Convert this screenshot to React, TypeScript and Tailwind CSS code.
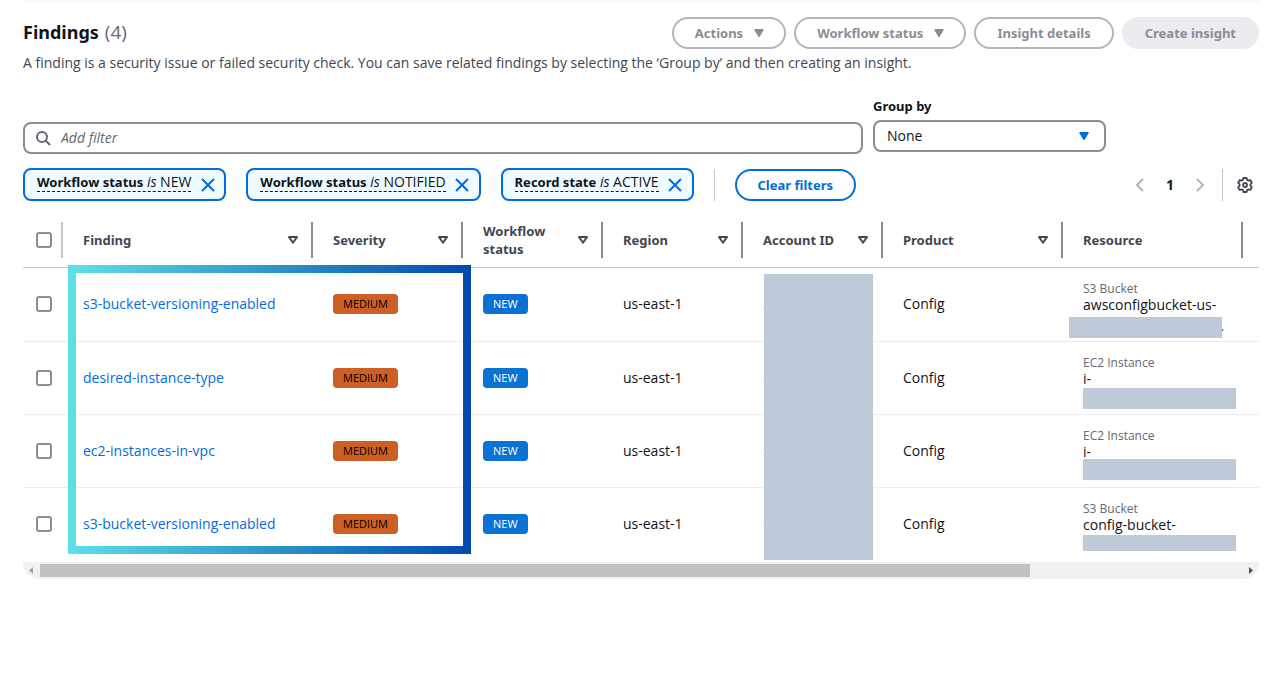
import type { ReactNode } from "react";

type Finding = {
  title: string;
  kind: string;
  resource: string;
  mask: string;
  tail?: string;
};

const findings: Finding[] = [
  {
    title: "s3-bucket-versioning-enabled",
    kind: "S3 Bucket",
    resource: "awsconfigbucket-us-",
    mask: "left-[6px] top-[49px] h-[21px]",
    tail: ".",
  },
  { title: "desired-instance-type", kind: "EC2 Instance", resource: "i-", mask: "left-5 top-[46px] h-[21px]" },
  { title: "ec2-instances-in-vpc", kind: "EC2 Instance", resource: "i-", mask: "left-5 top-[44px] h-[21px]" },
  {
    title: "s3-bucket-versioning-enabled",
    kind: "S3 Bucket",
    resource: "config-bucket-",
    mask: "left-5 top-[47px] h-4",
  },
];

const columns = [
  { label: "Finding", width: "w-[250px]", sortable: true },
  { label: "Severity", width: "w-[150px]", sortable: true },
  { label: "Workflow status", width: "w-[140px]", sortable: true },
  { label: "Region", width: "w-[140px]", sortable: true },
  { label: "Account ID", width: "w-[140px]", sortable: true },
  { label: "Product", width: "w-[180px]", sortable: true },
  { label: "Resource", width: "w-[180px]", sortable: false },
];

const chips = [
  { field: "Workflow status", value: "NEW" },
  { field: "Workflow status", value: "NOTIFIED" },
  { field: "Record state", value: "ACTIVE" },
];

function Caret({ className }: { className: string }) {
  return (
    <svg viewBox="0 0 16 16" className={className} aria-hidden="true">
      <path d="M4 4.800h8L8 11.400z" fill="currentColor" stroke="currentColor" strokeWidth="1.4" strokeLinejoin="round" />
    </svg>
  );
}

function SortIcon() {
  return (
    <svg viewBox="0 0 16 16" className="size-4 shrink-0" aria-hidden="true">
      <path d="M4 5h8l-4 5.800z" fill="none" stroke="currentColor" strokeWidth="2" strokeLinejoin="round" />
    </svg>
  );
}

function Chevron({ d }: { d: string }) {
  return (
    <svg viewBox="0 0 16 16" className="size-4" aria-hidden="true">
      <path d={d} fill="none" stroke="currentColor" strokeWidth="2" />
    </svg>
  );
}

function PillButton({ children, className, disabled }: { children: ReactNode; className: string; disabled?: boolean }) {
  return (
    <button
      type="button"
      disabled={disabled}
      className={`flex h-8 items-center gap-2 rounded-full border-2 px-[21px] font-['Noto_Sans',sans-serif] text-[13px] font-bold whitespace-nowrap ${className}`}
    >
      {children}
    </button>
  );
}

function Tick({ label }: { label: string }) {
  return (
    <input
      type="checkbox"
      aria-label={label}
      className="block size-4 appearance-none rounded-[3px] border-2 border-[#8c8c94] bg-white checked:bg-[#006ce0]"
    />
  );
}

export default function App() {
  return (
    <main className="bg-white pr-5 pb-24 pl-[23px] font-['Open_Sans',sans-serif] text-sm leading-5 text-[#0f141a]">
      <div className="h-[3px] bg-linear-to-b from-[#f6f6f7] to-white" />

      <header className="flex items-start justify-between pt-[14px]">
        <h1 className="flex items-baseline gap-[6px] text-lg leading-[30px]">
          <span className="font-['Noto_Sans',sans-serif] font-bold">Findings</span>
          <span className="text-[19px] font-normal text-[#656871]">(4)</span>
        </h1>
        <div className="flex gap-2">
          <PillButton disabled className="border-[#b4b4bb] text-[#8c8c94]">
            Actions <Caret className="-mr-1 size-4" />
          </PillButton>
          <PillButton disabled className="border-[#b4b4bb] text-[#8c8c94]">
            Workflow status <Caret className="-mr-1 size-4" />
          </PillButton>
          <PillButton disabled className="border-[#b4b4bb] text-[#8c8c94]">
            Insight details
          </PillButton>
          <PillButton disabled className="border-[#ebebf0] bg-[#ebebf0] text-[#8c8c94]">
            Create insight
          </PillButton>
        </div>
      </header>
      <p className="mt-1 text-[#424650]">
        A finding is a security issue or failed security check. You can save related findings by selecting the ‘Group
        by’ and then creating an insight.
      </p>

      <div className="mt-[23px] mr-[153px] flex gap-[10px]">
        <div className="mt-[26px] flex h-8 flex-1 items-center gap-[10px] rounded-lg border-2 border-[#8c8c94] px-[10px]">
          <svg viewBox="0 0 16 16" className="size-4 text-[#656871]" aria-hidden="true">
            <circle cx="7" cy="7" r="5" fill="none" stroke="currentColor" strokeWidth="2" />
            <path d="M10.7 10.7 15 15" stroke="currentColor" strokeWidth="2" />
          </svg>
          <input
            type="search"
            aria-label="Add filter"
            placeholder="Add filter"
            className="flex-1 bg-transparent outline-none placeholder:text-[#656871] placeholder:italic"
          />
        </div>
        <div className="w-[233px]">
          <label htmlFor="group-by" className="mb-1 block font-['Noto_Sans',sans-serif] text-[13px] leading-5 font-bold">
            Group by
          </label>
          <div className="relative">
            <select
              id="group-by"
              className="h-8 w-full appearance-none rounded-lg border-2 border-[#8c8c94] bg-white px-3"
            >
              <option>None</option>
            </select>
            <Caret className="pointer-events-none absolute top-2 right-[14px] size-4 text-[#006ce0]" />
          </div>
        </div>
      </div>

      <div className="mt-[14px] flex items-center justify-between">
        <div className="flex items-center gap-5">
          {chips.map((chip) => (
            <div
              key={chip.value}
              className="flex h-[33px] items-center rounded-lg border-2 border-[#006ce0] bg-[#f0fbff] pl-3"
            >
              <button type="button" className="mb-[5px] border-b border-dashed border-[#0f141a] leading-[18px]">
                <b className="font-['Noto_Sans',sans-serif] text-[13px] leading-4 font-bold">{chip.field}</b> <i>is</i>{" "}
                {chip.value}
              </button>
              <button
                type="button"
                aria-label={`Remove ${chip.field} ${chip.value}`}
                className="flex h-full w-[33px] items-center justify-center text-[#006ce0]"
              >
                <svg viewBox="0 0 16 16" className="size-4" aria-hidden="true">
                  <path d="m2 2 12 12M14 2 2 14" stroke="currentColor" strokeWidth="2" />
                </svg>
              </button>
            </div>
          ))}
          <div className="h-8 w-px bg-[#c6c6cd]" />
          <PillButton className="border-[#006ce0] text-[#006ce0]">Clear filters</PillButton>
        </div>
        <div className="flex items-center">
          <nav aria-label="Pagination" className="flex items-center">
            <button type="button" aria-label="Previous page" disabled className="px-2 text-[#b4b4bb]">
              <Chevron d="M11 2 5 8l6 6" />
            </button>
            <button type="button" aria-current="page" className="w-7 font-bold">
              1
            </button>
            <button type="button" aria-label="Next page" disabled className="px-2 text-[#b4b4bb]">
              <Chevron d="m5 2 6 6-6 6" />
            </button>
          </nav>
          <div className="ml-[6px] h-8 w-px bg-[#c6c6cd]" />
          <button type="button" aria-label="Preferences" className="ml-[14px] mr-[6px] text-[#424650]">
            <svg viewBox="0 0 16 16" className="size-4" fill="none" stroke="currentColor" aria-hidden="true">
              <path
                d="M6.400 1h3.200l.5 1.900 1.200.7 1.900-.6 1.600 2.800-1.400 1.500v1.400l1.400 1.500-1.600 2.800-1.900-.6-1.200.7-.5 1.900H6.400l-.5-1.900-1.200-.7-1.900.6-1.600-2.800 1.400-1.500V7.300L1.200 5.800 2.800 3l1.900.6 1.200-.7z"
                strokeWidth="1.8"
                strokeLinejoin="round"
              />
              <circle cx="8" cy="8" r="2" strokeWidth="1.8" />
            </svg>
          </button>
        </div>
      </div>

      <div className="relative mt-3">
        <div className="overflow-hidden pb-[2px]">
          <table className="w-full min-w-[1236px] table-fixed border-collapse text-left">
            <thead>
              <tr className="h-[54px] border-b border-[#c6c6cd] text-[#424650]">
                <th className="w-10 p-0">
                  <div className="flex h-9 items-center border-r-2 border-[#c6c6cd] pl-[13px]">
                    <Tick label="Select all findings" />
                  </div>
                </th>
                {columns.map((column) => (
                  <th
                    key={column.label}
                    scope="col"
                    className={`p-0 font-['Noto_Sans',sans-serif] text-[13px] font-bold ${column.width}`}
                  >
                    <div className="flex h-9 items-center justify-between border-r-2 border-[#8c8c94] pr-[10px] pl-5 leading-[18px]">
                      <span>{column.label}</span>
                      {column.sortable && (
                        <button type="button" aria-label={`Sort by ${column.label}`}>
                          <SortIcon />
                        </button>
                      )}
                    </div>
                  </th>
                ))}
                <td />
              </tr>
            </thead>
            <tbody>
              {findings.map((finding, index) => (
                <tr key={index} className="h-[73px] border-b border-[#ebebf0] first:h-[74px] last:border-b-0">
                  <td className="p-0 pl-[13px]">
                    <Tick label={`Select ${finding.title}`} />
                  </td>
                  <td className="p-0 pl-5">
                    <a href="#finding" className="text-[#006ce0]">
                      {finding.title}
                    </a>
                  </td>
                  <td className="p-0 pl-5">
                    <span className="block w-fit rounded bg-[#ce5f24] px-[10px] text-[11px] leading-5 text-black">
                      MEDIUM
                    </span>
                  </td>
                  <td className="p-0 pl-5">
                    <span className="block w-fit rounded bg-[#0972d3] px-[10px] text-[11px] leading-5 font-medium text-white">
                      NEW
                    </span>
                  </td>
                  <td className="p-0 pl-5">us-east-1</td>
                  <td className="p-0 pl-5">5</td>
                  <td className="p-0 pl-5">Config</td>
                  <td className="relative p-0 pl-5 align-top">
                    <div className="pt-[13px] text-xs leading-4 text-[#656871]">{finding.kind}</div>
                    <div className="leading-4">{finding.resource}</div>
                    {finding.tail && <span className="absolute top-12 right-[19px]">{finding.tail}</span>}
                    <div className={`absolute w-[153px] bg-[#becad8] ${finding.mask}`} />
                  </td>
                  <td />
                </tr>
              ))}
            </tbody>
          </table>
        </div>
        <div className="absolute top-[61px] left-[741px] h-[286px] w-[109px] bg-[#becad8]" />
        <div className="pointer-events-none absolute top-[52px] left-[45px] h-[289px] w-[403px] border-8 [border-image:linear-gradient(to_right,#5de0e6,#004aad)_8]" />
        <div className="flex h-[17px] items-center overflow-hidden rounded-b-2xl bg-[#f1f1f1]">
          <svg viewBox="0 0 17 17" className="size-[17px] text-[#a3a3a3]" aria-hidden="true">
            <path d="M10 5v7L6 8.500z" fill="currentColor" />
          </svg>
          <div className="flex-1">
            <div className="h-[13px] w-[82.4%] bg-[#c1c1c1]" />
          </div>
          <svg viewBox="0 0 17 17" className="size-[17px] text-[#505050]" aria-hidden="true">
            <path d="M7 5v7l4-3.500z" fill="currentColor" />
          </svg>
        </div>
      </div>
    </main>
  );
}
